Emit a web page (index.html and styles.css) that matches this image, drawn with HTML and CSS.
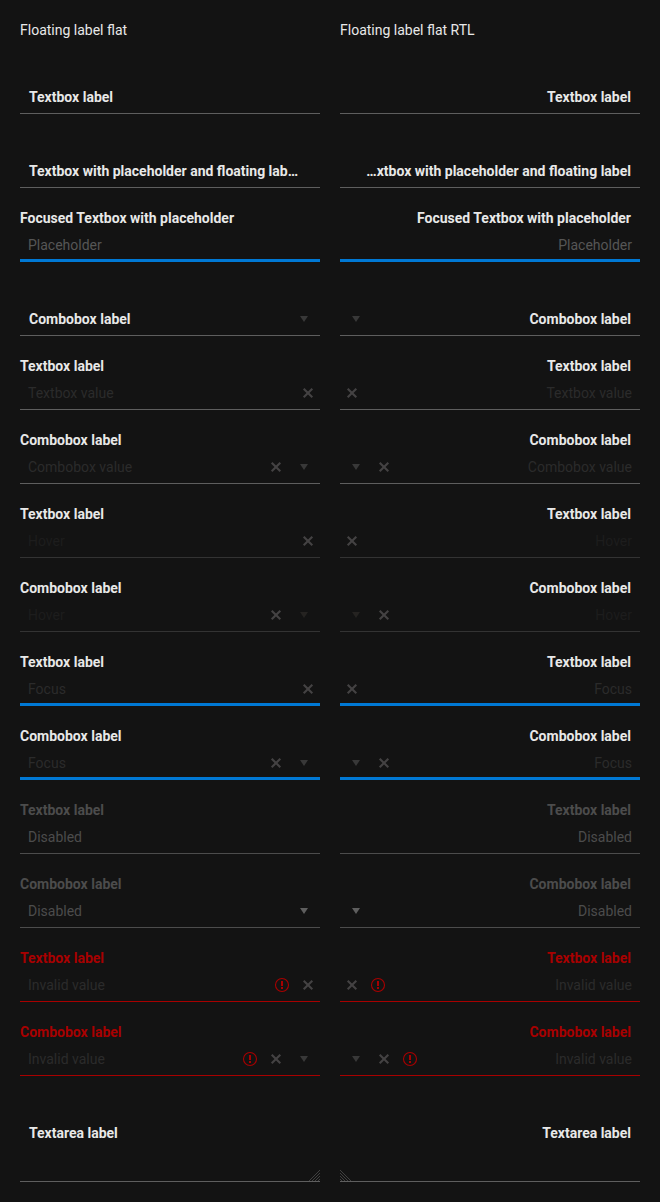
FILE: index.html
```
<!DOCTYPE html>
<html lang="en">
<head>
<meta charset="utf-8">
<title>Floating label flat</title>
<link rel="stylesheet" href="styles.css">
</head>
<body>
<svg class="defs" width="0" height="0" aria-hidden="true">
  <symbol id="clear" viewBox="0 0 16 16"><path d="M3.7 3.7 12.3 12.3M12.3 3.7 3.7 12.3" fill="none" stroke="currentColor" stroke-width="2.1"/></symbol>
  <symbol id="arrow" viewBox="0 0 16 16"><path d="M4 5h8l-4 6z" fill="currentColor"/></symbol>
  <symbol id="warn" viewBox="0 0 16 16"><circle cx="8" cy="8" r="6.5" fill="none" stroke="currentColor" stroke-width="1.1"/><path d="M7 4h2v5H7zM7 10h2v2H7z" fill="currentColor"/></symbol>
  <symbol id="grip" viewBox="0 0 11 11"><path d="M0 11 11 0M3 11l8-8M6 11l5-5M9 11l2-2" fill="none" stroke="currentColor" stroke-width="1"/></symbol>
</svg>
<main class="columns" id="columns"></main>
<script src="script.js"></script>
</body>
</html>
```
FILE: styles.css
```
* { box-sizing: border-box; }
body {
  margin: 0;
  background: #131313;
  color: #e8e8e8;
  font: 14px/20px Roboto, sans-serif;
}
.defs { display: block; position: absolute; }
.columns {
  display: grid;
  grid-template-columns: 300px 300px;
  gap: 20px;
  padding: 20px 20px 0;
}
.title { margin: 0; height: 20px; font-size: 14px; font-weight: 400; }
.field { height: 74px; padding-top: 20px; }
.label { height: 20px; font-weight: 700; white-space: nowrap; }
.box {
  display: flex;
  align-items: center;
  height: 34px;
  padding: 0 8px;
  border-bottom: 1px solid #5e5e5e;
}
.value { flex: 1; min-width: 0; color: #2b2b2b; }
.rest .value {
  color: #e8e8e8;
  font-weight: 700;
  padding-inline: 1px;
  max-width: 271.6px;
  overflow: hidden;
  text-overflow: ellipsis;
  white-space: nowrap;
}
.rtl .field { direction: rtl; }
.rtl .label { padding-right: 9px; }
.icon { width: 16px; height: 16px; flex: none; display: block; }
.clear { color: #444243; margin-inline: 12px -4px; }
.combo .clear { margin-inline-end: 12px; }
.arrow { color: #383838; }
.warn { color: #a80000; margin-inline-start: 10px; margin-inline-end: -2px; }
.placeholder .value { color: #565656; }
.hover .value { color: #1d1d1d; }
.hover .box { border-color: #333; }
.hover .arrow { color: #252321; }
.focus .box { border-bottom: 3px solid #0078d4; }
.focus .value, .focus .icon { position: relative; top: 1px; }
.disabled .label, .disabled .value { color: #4c4c4c; }
.disabled .box { border-color: #4c4c4c; }
.disabled .arrow { color: #5e5e5e; }
.invalid .label { color: #a80000; }
.invalid .box { border-color: #a80000; }
.area { height: 106px; }
.area .box { height: 66px; align-items: flex-start; padding-top: 7px; }
.grip { width: 11px; height: 11px; flex: none; align-self: flex-end; color: #404040; margin-inline: auto -8px; }
.rtl .grip { transform: scaleX(-1); }
```
FILE: script.js
```
const long = 'Textbox with placeholder and floating label';
const fields = [
  ['rest', '', 'Textbox label', []],
  ['rest', '', long, []],
  ['focus placeholder', 'Focused Textbox with placeholder', 'Placeholder', []],
  ['rest combo', '', 'Combobox label', ['arrow']],
  ['', 'Textbox label', 'Textbox value', ['clear']],
  ['combo', 'Combobox label', 'Combobox value', ['clear', 'arrow']],
  ['hover', 'Textbox label', 'Hover', ['clear']],
  ['hover combo', 'Combobox label', 'Hover', ['clear', 'arrow']],
  ['focus', 'Textbox label', 'Focus', ['clear']],
  ['focus combo', 'Combobox label', 'Focus', ['clear', 'arrow']],
  ['disabled', 'Textbox label', 'Disabled', []],
  ['disabled combo', 'Combobox label', 'Disabled', ['arrow']],
  ['invalid', 'Textbox label', 'Invalid value', ['warn', 'clear']],
  ['invalid combo', 'Combobox label', 'Invalid value', ['warn', 'clear', 'arrow']],
  ['rest area', '', 'Textarea label', ['grip']]
];
const icon = name => `<svg class="${name === 'grip' ? '' : 'icon '}${name}"><use href="#${name}"/></svg>`;
const field = ([state, label, value, icons]) =>
  `<div class="field ${state}"><div class="label">${label}</div><div class="box"><div class="value">${value}</div>${icons.map(icon).join('')}</div></div>`;
const column = (dir, title) =>
  `<section class="${dir}"><h1 class="title">${title}</h1>${fields.map(field).join('')}</section>`;
document.getElementById('columns').innerHTML =
  column('ltr', 'Floating label flat') + column('rtl', 'Floating label flat RTL');
```
